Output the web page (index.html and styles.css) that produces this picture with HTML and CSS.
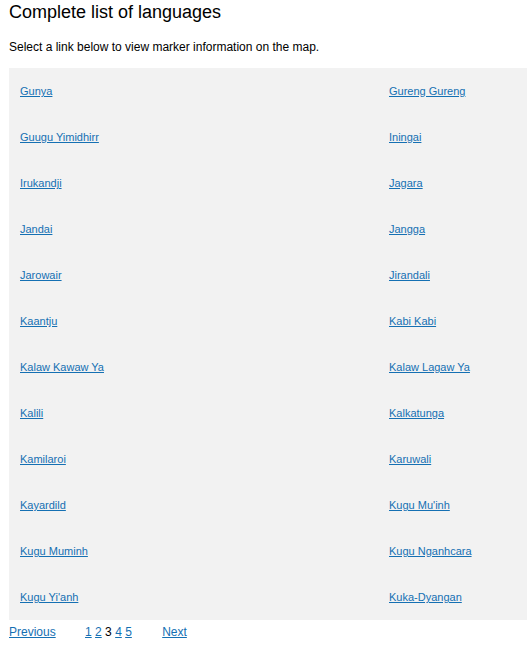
FILE: index.html
```html
<!DOCTYPE html>
<html>
	<head>
		<meta charset="utf-8">
		<title>Complete list of languages</title>
		<link rel="stylesheet" href="styles.css">
	</head>
	<body>
		<!-- 标题 -->
		<h1 class="title">Complete list of languages</h1>
		<p class="intro">Select a link below to view marker information on the map.</p>

		<!-- 语言列表 -->
		<div class="lang-list">
			<div class="lang"><a href="javascript:;">Gunya</a></div>
			<div class="lang"><a href="javascript:;">Gureng Gureng</a></div>
			<div class="lang"><a href="javascript:;">Guugu Yimidhirr</a></div>
			<div class="lang"><a href="javascript:;">Iningai</a></div>
			<div class="lang"><a href="javascript:;">Irukandji</a></div>
			<div class="lang"><a href="javascript:;">Jagara</a></div>
			<div class="lang"><a href="javascript:;">Jandai</a></div>
			<div class="lang"><a href="javascript:;">Jangga</a></div>
			<div class="lang"><a href="javascript:;">Jarowair</a></div>
			<div class="lang"><a href="javascript:;">Jirandali</a></div>
			<div class="lang"><a href="javascript:;">Kaantju</a></div>
			<div class="lang"><a href="javascript:;">Kabi Kabi</a></div>
			<div class="lang"><a href="javascript:;">Kalaw Kawaw Ya</a></div>
			<div class="lang"><a href="javascript:;">Kalaw Lagaw Ya</a></div>
			<div class="lang"><a href="javascript:;">Kalili</a></div>
			<div class="lang"><a href="javascript:;">Kalkatunga</a></div>
			<div class="lang"><a href="javascript:;">Kamilaroi</a></div>
			<div class="lang"><a href="javascript:;">Karuwali</a></div>
			<div class="lang"><a href="javascript:;">Kayardild</a></div>
			<div class="lang"><a href="javascript:;">Kugu Mu'inh</a></div>
			<div class="lang"><a href="javascript:;">Kugu Muminh</a></div>
			<div class="lang"><a href="javascript:;">Kugu Nganhcara</a></div>
			<div class="lang"><a href="javascript:;">Kugu Yi'anh</a></div>
			<div class="lang"><a href="javascript:;">Kuka-Dyangan</a></div>
		</div>

		<!-- 分页 -->
		<div class="pager">
			<a href="javascript:;">Previous</a>
			<span class="pages">
				<a href="javascript:;">1</a>
				<a href="javascript:;">2</a>
				<span class="current">3</span>
				<a href="javascript:;">4</a>
				<a href="javascript:;">5</a>
			</span>
			<a href="javascript:;">Next</a>
		</div>
	</body>
</html>
```

FILE: styles.css
```css
*{
	margin: 0;padding: 0;
}
body{
	margin-left: 9px;
	font-family: "Liberation Sans", Arial, sans-serif;
	color: #000;
	background-color: #fff;
}
a{
	color: #1570b3;
}
.title{
	margin-top: 2px;
	font-size: 18px;
	font-weight: normal;
}
.intro{
	margin-top: 17px;
	font-size: 12px;
}
/* 两列网格,每行46px */
.lang-list{
	display: grid;
	grid-template-columns: 369px 1fr;
	grid-auto-rows: 46px;
	width: 507px;
	margin-top: 14px;
	padding-left: 11px;
	background-color: #f2f2f2;
}
.lang{
	display: flex;
	align-items: center;
	font-size: 11px;
}
.pager{
	margin-top: 5px;
	font-size: 12px;
}
.pages{
	margin: 0 27px 0 26px;
}
```
